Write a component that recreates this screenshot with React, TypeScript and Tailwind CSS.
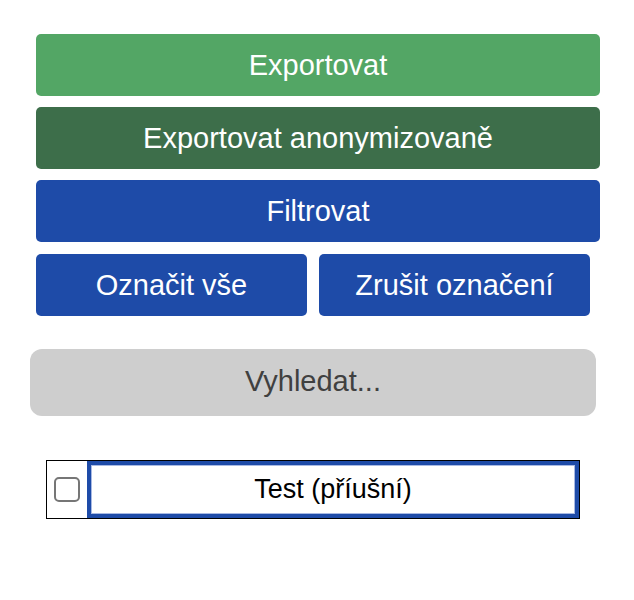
import React from 'react';

const font = { fontFamily: '"Liberation Sans", Arial, Helvetica, sans-serif' };

const Btn: React.FC<{ label: string; className: string }> = ({ label, className }) => (
  <button
    type="button"
    className={`h-[62px] rounded-[5px] text-white text-[29px] leading-none flex items-center justify-center ${className}`}
  >
    {label}
  </button>
);

export default function App() {
  return (
    <div className="w-[634px] h-[600px] bg-white flex flex-col" style={font}>
      <div className="flex flex-col gap-[11px] pt-[34px] pl-[36px] w-[600px]">
        <Btn label="Exportovat" className="w-full bg-[#53a665]" />
        <Btn label="Exportovat anonymizovaně" className="w-full bg-[#3d6e4a]" />
        <Btn label="Filtrovat" className="w-full bg-[#1e4ba8]" />
        <div className="flex gap-[12px] mt-[1px]">
          <Btn label="Označit vše" className="w-[271px] bg-[#1e4ba8]" />
          <Btn label="Zrušit označení" className="w-[271px] bg-[#1e4ba8]" />
        </div>
      </div>

      <div className="ml-[30px] mt-[33px] w-[566px] h-[67px] rounded-[12px] bg-[#cecece] flex items-center justify-center pb-[2px] text-[29px] text-[#404040]">
        Vyhledat...
      </div>

      <div className="ml-[46px] mt-[44px] w-[534px] h-[59px] border border-black flex">
        <div className="w-[40px] flex items-center justify-center">
          <div className="w-[26px] h-[25px] rounded-[5px] border-2 border-[#767676] bg-white" />
        </div>
        <div className="flex-1 border-[4px] border-[#1e4ba8]">
          <div className="h-full border border-[#a8b9e3] bg-white flex items-center justify-center text-[27px] text-black">
            Test (příušní)
          </div>
        </div>
      </div>
    </div>
  );
}
